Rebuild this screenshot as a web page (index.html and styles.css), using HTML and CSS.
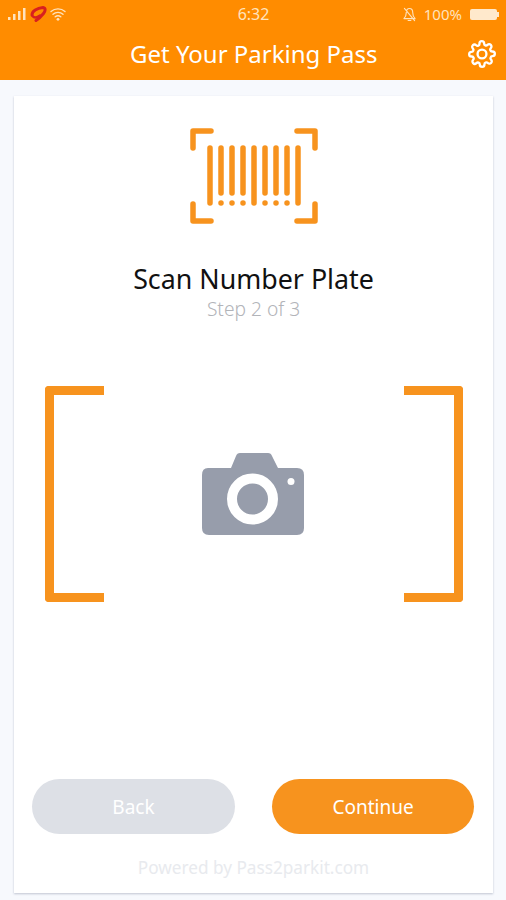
FILE: index.html
```html
<!DOCTYPE html>
<html lang="en">
  <head>
    <meta charset="UTF-8" />
    <title>Get Your Parking Pass</title>
    <link rel="stylesheet" href="styles.css">
  </head>
  <body>
    <header class="app-header">
      <div class="status-bar">
        <div class="status-left">
          <svg class="signal" width="18" height="12" viewBox="0 0 18 12">
            <rect x="0" y="9" width="2.500" height="3" fill="#ffe3bd" />
            <rect x="5" y="6" width="2.500" height="6" fill="#ffe3bd" />
            <rect x="10" y="3" width="2.500" height="9" fill="#ffe3bd" />
            <rect x="15" y="0" width="2.500" height="12" fill="#ffe3bd" />
          </svg>
          <svg class="carrier" width="17" height="16" viewBox="0 0 17 16">
            <path d="M2 9C2 5 7 2 13 1.500 16 2 15.500 5 13.500 7.500 11.500 10 9 12.500 6 14.500" fill="none" stroke="#d8201f" stroke-width="3" stroke-linecap="round" />
            <path d="M2.500 10c1.500 2 4 2 7.500-.5" fill="none" stroke="#d8201f" stroke-width="2.400" stroke-linecap="round" />
          </svg>
          <svg class="wifi" width="16" height="14" viewBox="0 0 16 14">
            <path d="M1 4.500c4-3.500 10-3.500 14 0M3 7.200c2.800-2.400 7.200-2.400 10 0M5.200 9.800c1.600-1.200 4-1.200 5.600 0" fill="none" stroke="#ffe3bd" stroke-width="1.400" stroke-linecap="round" />
            <circle cx="8" cy="12.300" r="1.400" fill="#ffe3bd" />
          </svg>
        </div>
        <div class="status-time">6:32</div>
        <div class="status-right">
          <svg class="bell" width="13" height="15" viewBox="0 0 14 16">
            <path d="M7 1.500c-2.500 0-3.500 2-3.500 4.500 0 3-1 5-2.500 6.500h12c-1.500-1.500-2.500-3.500-2.500-6.500 0-2.500-1-4.500-3.500-4.500zM5.500 14.500h3M1.500 1.500l11 13" fill="none" stroke="#ffe3bd" stroke-width="1.200" stroke-linecap="round" stroke-linejoin="round" />
          </svg>
          <span class="battery-level">100%</span>
          <div class="battery"></div>
        </div>
      </div>
      <div class="title-bar">
        <h1>Get Your Parking Pass</h1>
        <svg class="gear" width="28" height="28" viewBox="0 0 24 24" fill="none" stroke="#fff" stroke-width="2" stroke-linecap="round" stroke-linejoin="round">
          <circle cx="12" cy="12" r="3.800" />
          <path d="M19.400 15a1.650 1.650 0 0 0 .33 1.820l.06.06a2 2 0 1 1-2.830 2.830l-.06-.06a1.650 1.650 0 0 0-2.800 1.170V21a2 2 0 1 1-4 0v-.09a1.650 1.650 0 0 0-2.820-1.110l-.06.06a2 2 0 1 1-2.830-2.830l.06-.06a1.650 1.650 0 0 0-1.170-2.800H3a2 2 0 1 1 0-4h.09a1.650 1.650 0 0 0 1.110-2.820l-.06-.06a2 2 0 1 1 2.830-2.830l.06.06a1.650 1.650 0 0 0 2.800-1.170V3a2 2 0 1 1 4 0v.09a1.650 1.650 0 0 0 2.820 1.110l.06-.06a2 2 0 1 1 2.830 2.830l-.06.06a1.650 1.650 0 0 0 1.170 2.800H21a2 2 0 1 1 0 4h-.09a1.650 1.650 0 0 0-1.510 1.170z" />
        </svg>
      </div>
    </header>

    <main class="card">
      <svg class="barcode" width="128" height="96" viewBox="0 0 128 96" fill="none" stroke="#f7931e" stroke-width="5.500" stroke-linecap="round">
        <path d="M3 20V3H21M107 3H125V20M3 76V93H21M107 93H125V76" stroke-linejoin="round" />
        <path d="M20 20V75M31 20V65M42 20V65M53 20V65M64 20V75M75 20V65M86 20V65M97 20V65M108 20V75" />
        <path d="M31 75h.01M42 75h.01M53 75h.01M75 75h.01M86 75h.01M97 75h.01" />
      </svg>

      <h2 class="step-title">Scan Number Plate</h2>
      <p class="step-count">Step 2 of 3</p>

      <div class="scan-area">
        <div class="bracket bracket-left"></div>
        <svg class="camera" width="102" height="82" viewBox="0 0 102 82">
          <path d="M6 15H29L34 3Q35 0 38 0H66Q69 0 70 3L76 15H95Q102 15 102 22V75Q102 82 95 82H7Q0 82 0 75V22Q0 15 6 15Z" fill="#979dab" />
          <circle cx="50.500" cy="46" r="20.500" fill="none" stroke="#fff" stroke-width="10" />
          <circle cx="89" cy="28.500" r="3.500" fill="#fff" />
        </svg>
        <div class="bracket bracket-right"></div>
      </div>

      <div class="actions">
        <button class="btn btn-back">Back</button>
        <button class="btn btn-continue">Continue</button>
      </div>

      <p class="powered">Powered by Pass2parkit.com</p>
    </main>
  </body>
</html>
```

FILE: styles.css
```css
* {
  box-sizing: border-box;
  margin: 0;
  padding: 0;
  font-family: "Noto Sans", "Open Sans", sans-serif;
}

body {
  width: 506px;
  height: 900px;
  overflow: hidden;
  background-color: #f7f9fd;
  padding-bottom: 7px;
  display: flex;
  flex-direction: column;
}

.app-header {
  height: 80px;
  background-color: #ff8c00;
  color: white;
  flex-shrink: 0;
}

.status-bar {
  height: 28px;
  padding: 0 7px 0 8px;
  display: grid;
  grid-template-columns: 1fr auto 1fr;
  align-items: center;
  font-size: 16px;
  color: #ffe3bd;
}

.status-left {
  display: flex;
  align-items: center;
  gap: 4px;
}

.wifi {
  margin-left: -1px;
}

.status-right {
  display: flex;
  align-items: center;
  justify-content: flex-end;
  gap: 8px;
}

.battery-level {
  font-size: 15px;
}

.battery {
  width: 27px;
  height: 11px;
  margin-right: 2px;
  background-color: #ffe9cc;
  border-radius: 2px;
  position: relative;
}

/* the little nub on the end of the battery */
.battery::after {
  content: "";
  position: absolute;
  left: 27px;
  top: 3px;
  width: 2px;
  height: 5px;
  background-color: #ffe9cc;
}

.title-bar {
  height: 52px;
  padding: 0 10px 0 130px;
  display: flex;
  align-items: center;
  justify-content: space-between;
}

.title-bar h1 {
  font-size: 24px;
  font-weight: 400;
  line-height: 52px;
}

.card {
  flex: 1;
  margin: 16px 13px 0 14px;
  padding-top: 32px;
  background-color: white;
  box-shadow: 0 1px 2px rgba(90, 100, 130, 0.35);
  display: flex;
  flex-direction: column;
  align-items: center;
}

.step-title {
  margin-top: 38px;
  font-size: 26.800px;
  font-weight: 400;
  line-height: 34px;
  color: #111;
}

.step-count {
  margin-top: 1px;
  font-size: 19.200px;
  font-weight: 300;
  line-height: 24px;
  color: #b2b4b9;
}

.scan-area {
  width: 418px;
  height: 216px;
  margin-top: 65px;
  display: flex;
  align-items: center;
  justify-content: space-between;
}

.bracket {
  width: 59px;
  height: 216px;
  border: 9px solid #f7931e;
}

.bracket-left {
  border-right: none;
  border-radius: 4px 0 0 4px;
}

.bracket-right {
  border-left: none;
  border-radius: 0 4px 4px 0;
}

.camera {
  margin-right: 1px;
}

.actions {
  width: 442px;
  margin-top: 177px;
  margin-right: 1px;
  display: flex;
  justify-content: space-between;
}

.btn {
  width: 203px;
  height: 55px;
  border: none;
  border-radius: 28px;
  color: white;
  font-size: 19px;
  cursor: pointer;
}

.btn-back {
  background-color: #dde0e6;
}

.btn-continue {
  width: 202px;
  background-color: #f7931e;
}

.powered {
  margin-top: 22px;
  font-size: 17.200px;
  line-height: 24px;
  color: #e8eaee;
}
```
